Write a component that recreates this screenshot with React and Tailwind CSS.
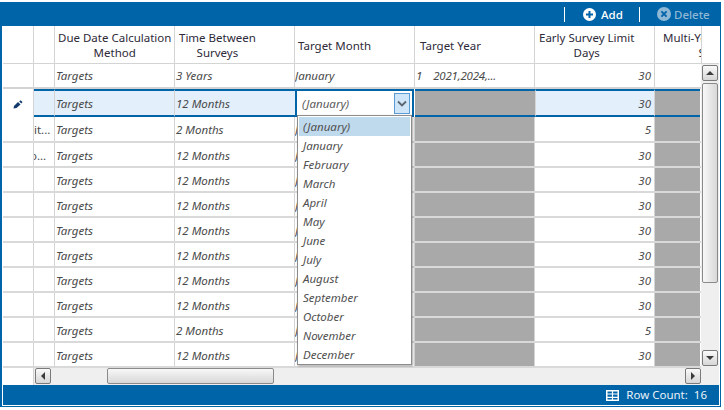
const months = ["(January)","January","February","March","April","May","June","July","August","September","October","November","December"];
const rows = [
  { lead: "it...", t: "2 Months", d: 5 },
  { lead: "o...", t: "12 Months", d: 30, clip: true },
  { t: "12 Months", d: 30 },
  { t: "12 Months", d: 30 },
  { t: "12 Months", d: 30 },
  { t: "12 Months", d: 30 },
  { t: "12 Months", d: 30 },
  { t: "12 Months", d: 30 },
  { t: "2 Months", d: 5 },
  { t: "12 Months", d: 30 },
];
const gridCols = "grid grid-cols-[31px_21px_120px_120px_120px_120px_120px_45px]";
const vline = "border-r border-[#d4d4d4]";
const cell = "flex items-center overflow-hidden whitespace-nowrap italic text-[#4a4a4a] pt-px";
const cellLow = "flex items-center overflow-hidden whitespace-nowrap italic text-[#4a4a4a] pt-[2px]";

function Head({ children, className = "" }) {
  return <div className={`flex items-center text-center leading-[15px] text-[#2e2a38] whitespace-nowrap ${vline} ${className}`}><div>{children}</div></div>;
}

function ScrollBtn({ dir, className = "" }) {
  const pts = { up: "1,7 5,3 9,7", down: "1,3 5,7 9,3", left: "7,1 3,5 7,9", right: "3,1 7,5 3,9" }[dir];
  return (
    <div className={`w-[16px] h-[16px] shrink-0 flex items-center justify-center rounded-[2px] border border-[#7a7a7a] bg-gradient-to-b from-[#fafafa] to-[#d6d6d6] ${className}`}>
      <svg width="10" height="10" viewBox="0 0 10 10"><polygon points={pts} fill="#3c3c3c" /></svg>
    </div>
  );
}

export default function App() {
  return (
    <div className="w-[724px] h-[410px] bg-white overflow-hidden text-[11.5px]" style={{ fontFamily: '"Noto Sans", "Open Sans", sans-serif' }}>
      <div className="mt-[2px] w-[721px] h-[405px] bg-[#0064a8] pl-[2px] pr-px pb-px">
        <div className="h-full flex flex-col border-l border-r border-b border-white bg-white">
          {/* Toolbar */}
          <div className="h-[24px] shrink-0 bg-[#0064a8] flex items-center justify-end -ml-px mr-[-1px] pr-[12px]">
            <div className="w-px h-[15px] bg-white mr-[18px]" />
            <svg width="13" height="13" viewBox="0 0 13 13" className="mr-[5px]">
              <circle cx="6.5" cy="6.5" r="6.5" fill="#fff" />
              <path d="M6.5 3v7M3 6.5h7" stroke="#0064a8" strokeWidth="2" />
            </svg>
            <span className="w-[22px] pt-px whitespace-nowrap text-white font-medium mr-[16px]">Add</span>
            <div className="w-px h-[15px] bg-white mr-[17px]" />
            <svg width="14" height="14" viewBox="0 0 14 14" className="mr-[3px]">
              <circle cx="7" cy="7" r="7" fill="#8fb8d6" />
              <path d="M4.4 4.4l5.2 5.2M9.6 4.4l-5.2 5.2" stroke="#0064a8" strokeWidth="1.9" />
            </svg>
            <span className="w-[34px] pt-px whitespace-nowrap text-[#8fb8d6] font-medium">Delete</span>
          </div>

          {/* Grid + vertical scrollbar */}
          <div className="flex-1 min-h-0 flex">
            <div className="w-[698px] shrink-0 overflow-hidden flex flex-col">
              {/* Header */}
              <div className={`${gridCols} h-[38px] shrink-0 border-b border-[#d4d4d4]`}>
                <Head />
                <Head />
                <Head className="pl-[3px]">Due Date Calculation<br />Method</Head>
                <Head className="pl-[4px]">Time Between<br />Surveys</Head>
                <Head className="pl-[3px] pt-[2px]">Target Month</Head>
                <Head className="pl-[5px] pt-[2px]">Target Year</Head>
                <Head className="pl-[4px]">Early Survey Limit<br />Days</Head>
                <div className="w-[120px] text-center leading-[15px] pt-[4px] pl-[3px] text-[#2e2a38] whitespace-nowrap">Multi-Year Schedule<br />Survey</div>
              </div>
              {/* Filter row */}
              <div className={`${gridCols} h-[25px] shrink-0 border-b-2 border-[#d4d4d4]`}>
                <div className={vline} />
                <div className={vline} />
                <div className={`${cell} ${vline} pl-px`}>Targets</div>
                <div className={`${cell} ${vline} pl-px`}>3 Years</div>
                <div className={`${cell} ${vline}`}>January</div>
                <div className={`${cell} ${vline} gap-[11px] pl-px tracking-[-0.2px]`}><span>1</span><span>2021,2024,...</span></div>
                <div className={`${cell} ${vline} justify-end pr-[3px]`}>30</div>
                <div />
              </div>
              {/* Selected row */}
              <div className={`${gridCols} h-[28px] shrink-0`}>
                <div className={`flex items-center justify-center pt-[2px] ${vline}`}>
                  <svg width="10" height="9" viewBox="0 0 10 9">
                    <path d="M0.5 8.5L1 6l4-4 2.5 2.5-4 3.5z" fill="#123a6b" />
                    <path d="M6.2 1.5L7.5.3l2 1.8-1.2 1.3z" fill="#123a6b" />
                  </svg>
                </div>
                <div className="border-y-2 border-[#0064a8] bg-[#e3effb] border-r border-r-[#d4d4d4]" />
                <div className={`${cell} border-y-2 border-[#0064a8] bg-[#e3effb] border-r border-r-[#d4d4d4] pl-px`}>Targets</div>
                <div className={`${cell} border-y-2 border-[#0064a8] bg-[#e3effb] pl-px`}>12 Months</div>
                <div className="relative border-2 border-[#0064a8] mr-px bg-white flex items-center pl-[5px]">
                  <span className="italic text-[#5a5a5a] pt-px">(January)</span>
                  <div className="ml-auto mr-[2px] w-[16px] h-[21px] border border-[#5b9bd5] bg-[#cfe5f8] flex items-center justify-center">
                    <svg width="10" height="7" viewBox="0 0 10 7"><path d="M1 1.5l4 4 4-4" fill="none" stroke="#5a6570" strokeWidth="1.8" /></svg>
                  </div>
                  {/* Dropdown list */}
                  <div className="absolute left-0 top-[24px] w-[115px] h-[250px] z-10 bg-white border border-[#8c8c8c] shadow-[1px_1px_2px_rgba(0,0,0,0.35)] p-px">
                    {months.map((m, i) => (
                      <div key={m} className={`h-[19px] flex items-center pl-[4px] italic text-[#505050] ${i === 0 ? "bg-[#bfd9ed]" : ""}`}>{m}</div>
                    ))}
                  </div>
                </div>
                <div className="border-y-2 border-[#0064a8] bg-[#a9a9a9]" />
                <div className={`${cell} border-y-2 border-[#0064a8] bg-[#e3effb] justify-end pr-[3px] border-x border-x-[#d4d4d4]`}>30</div>
                <div className="border-y-2 border-[#0064a8] bg-[#a9a9a9]" />
              </div>
              {/* Data rows */}
              {rows.map((r, i) => {
                const c = i === 0 ? cell : cellLow;
                return (
                  <div key={i} className={`${gridCols} ${i === 0 ? "h-[26px]" : "h-[25px]"} shrink-0 border-b-2 border-[#d9d9d9]`}>
                    <div className={vline} />
                    <div className={`${c} ${vline}`}><span className={r.clip ? "-ml-[4px] not-italic" : "not-italic"}>{r.lead}</span></div>
                    <div className={`${c} ${vline} pl-px`}>Targets</div>
                    <div className={`${c} ${vline} pl-px`}>{r.t}</div>
                    <div className={`${c} ${vline}`}>January</div>
                    <div className={`bg-[#a9a9a9] ${vline}`} />
                    <div className={`${c} ${vline} justify-end pr-[3px]`}>{r.d}</div>
                    <div className="bg-[#a9a9a9]" />
                  </div>
                );
              })}
            </div>

            {/* Vertical scrollbar column */}
            <div className="flex-1 flex flex-col">
              <div className="h-[38px] shrink-0 border-b border-[#d4d4d4] border-l" />
              <div className="flex-1 bg-[#efefef] flex flex-col items-start pl-[1px] pt-px pb-[2px]">
                <ScrollBtn dir="up" />
                <div className="w-[16px] h-[200px] mt-[2px] rounded-[2px] border border-[#8a8a8a] bg-gradient-to-r from-[#f8f8f8] to-[#d8d8d8]" />
                <ScrollBtn dir="down" className="mt-auto" />
              </div>
            </div>
          </div>

          {/* Horizontal scrollbar */}
          <div className="h-[17px] shrink-0 flex">
            <div className={`w-[31px] shrink-0 ${vline}`} />
            <div className="flex-1 bg-[#efefef] flex items-start pl-[1px] pr-[18px]">
              <ScrollBtn dir="left" />
              <div className="ml-[56px] w-[167px] h-[16px] rounded-[2px] border border-[#8a8a8a] bg-gradient-to-b from-[#f8f8f8] to-[#d8d8d8]" />
              <ScrollBtn dir="right" className="ml-auto" />
            </div>
          </div>

          {/* Status bar */}
          <div className="h-[20px] shrink-0 bg-[#0064a8] flex items-center justify-end pr-[12px] text-[#eaf2f8]">
            <svg width="13" height="11" viewBox="0 0 13 11" className="mr-[7px]">
              <rect x="0.75" y="0.75" width="11.5" height="9.5" fill="none" stroke="#fff" strokeWidth="1.5" />
              <path d="M0 4h13M0 7.3h13M6.5 1v9" stroke="#fff" strokeWidth="1.2" />
            </svg>
            <span className="mr-[6px]">Row Count:</span>
            <span>16</span>
          </div>
        </div>
      </div>
    </div>
  );
}
